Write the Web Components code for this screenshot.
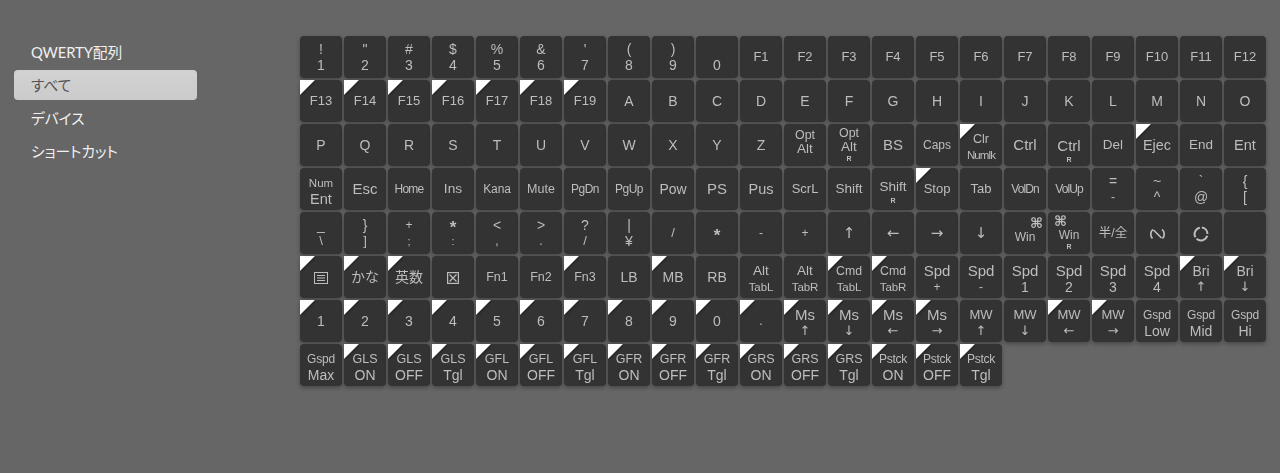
<!DOCTYPE html>
<html lang="ja"><head><meta charset="utf-8"><title>Keymap</title>
<style>
html,body{margin:0;height:473px;overflow:hidden;background:#666}
body{font-family:"Liberation Sans","Noto Sans CJK JP",sans-serif}
</style></head><body>
<app-shell>
  <side-nav slot="nav">
    <nav-item>QWERTY配列</nav-item>
    <nav-item selected>すべて</nav-item>
    <nav-item>デバイス</nav-item>
    <nav-item>ショートカット</nav-item>
  </side-nav>
  <key-board slot="main"></key-board>
</app-shell>
<script>
const def=(name,css,html,extra)=>{
  class C extends HTMLElement{
    constructor(){super();this.attachShadow({mode:'open'}).innerHTML=`<style>${css}</style>${html}`;}
    connectedCallback(){extra&&extra(this);}
  }
  customElements.define(name,C);
};
def('app-shell',`:host{display:flex;align-items:flex-start;height:473px;box-sizing:border-box;padding:36px 0 0 14px}
  .n{flex:0 0 183px;margin-top:1px}.m{margin-left:103px}`,
  `<div class="n"><slot name="nav"></slot></div><div class="m"><slot name="main"></slot></div>`);
def('side-nav',`:host{display:flex;flex-direction:column;gap:3px}`,`<slot></slot>`);
def('nav-item',`:host{display:flex;align-items:center;box-sizing:border-box;height:30px;padding:0 0 2px 17px;border-radius:4px;
  font:14.8px Lato,"Noto Sans CJK JP",sans-serif;font-feature-settings:"palt";color:#f0f0f0;letter-spacing:-.1px}
  :host([selected]){background:linear-gradient(#d2d2d2,#cbcbcb);color:#555}`,`<slot></slot>`);
def('key-line',`:host{display:block;text-align:center;white-space:nowrap}`,`<slot></slot>`);
def('key-cap',`:host{position:relative;display:flex;flex-direction:column;justify-content:center;
  box-sizing:border-box;width:42px;height:42px;border-radius:4px;background:#333;color:#bdbdbd;
  box-shadow:0 2px 4px rgba(0,0,0,.3)}
  .c{filter:blur(.45px);display:flex;flex-direction:column;justify-content:center;height:100%;width:100%}
  .f{display:none;position:absolute;left:0;top:0;width:15px;height:15px;background:linear-gradient(135deg,#fff 48%,#888 50%,rgba(0,0,0,.25) 53%,transparent 64%)}
  :host([flag]) .f{display:block}`,
  `<div class="c"><slot></slot></div><div class="f"></div>`);
const icons={
 menu:'<svg width="14" height="12" viewBox="0 0 14 12" fill="none" stroke="#bdbdbd"><rect x=".5" y=".5" width="13" height="11"/><path d="M3 3.500h8M3 6h8M3 8.500h8"/></svg>',
 cross:'<svg width="12" height="12" viewBox="0 0 12 12" fill="none" stroke="#bdbdbd" stroke-width="1.2"><rect x=".6" y=".6" width="10.800" height="10.800"/><path d="M2.500 2.500l7 7M9.500 2.500l-7 7"/></svg>',
 wave:'<svg width="17" height="12" viewBox="0 0 17 12" fill="none" stroke="#bdbdbd" stroke-width="1.7"><path d="M4 1.500C1.500 3 .8 8 3.500 10.500M4.500 2l8 8M13 1.500c2.500 1.500 3.200 6.500 .5 9"/></svg>',
 ring:'<svg width="16" height="16" viewBox="0 0 16 16" fill="none" stroke="#bdbdbd" stroke-width="2"><path d="M8.800 1.600A6.500 6.500 0 0 1 14.500 8M14.200 9.800A6.500 6.500 0 0 1 3.600 12.800M2.400 11.200A6.500 6.500 0 0 1 6.800 1.700"/></svg>'
};
const S={F13:13,F14:13,F15:13,F16:13,F17:13,F18:13,F19:13,F1:13,F2:13,F3:13,F4:13,F5:13,F6:13,F7:13,F8:13,F9:13,F10:13,F11:13,F12:13,
Opt:12.400,Clr:12.500,Numlk:11.500,Caps:12,Ctrl:15,BS:15,Del:13.500,Ejec:14.400,End:13.500,Ent:14.500,Num:11.500,Esc:15,Home:12,Ins:13.700,Kana:12,Mute:12.500,PgDn:12,PgUp:12,Pow:14,PS:15,Pus:14.500,ScrL:13,Shift:13.500,Stop:13,Tab:13,VolDn:12,VolUp:12,
Win:12,'半/全':12.500,Fn1:12.500,Fn2:12.500,Fn3:12.500,Alt:13.500,TabL:11.500,TabR:11.500,Cmd:12.300,Spd:15,Ms:15,MW:13,Gspd:12,Pstck:12,GLS:12.500,GFL:12.500,GFR:12.500,GRS:12.500,Bri:14,Max:14,ON:14,OFF:14,Tgl:14,Low:14,Mid:14,Hi:14,
':':11,';':11,'\\':13,']':13,',':12,'.':12,'-':12,'+':12,'/':13};
const L={Home:-.8,VolDn:-.9,VolUp:-.9,PgDn:-.5,PgUp:-.5,Numlk:-.9,Pstck:-.3,Gspd:-.2,Kana:-.1,TabL:-.1,TabR:-.1};
const rows=[
['!\n1','"\n2','#\n3','$\n4','%\n5','&\n6',"'\n7",'(\n8',')\n9','\n0','F1','F2','F3','F4','F5','F6','F7','F8','F9','F10','F11','F12'],
['*F13','*F14','*F15','*F16','*F17','*F18','*F19',...'ABCDEFGHIJKLMNO'],
[...'PQRSTUVWXYZ','Opt\nAlt','Opt\nAlt\nR','BS','Caps','*Clr\nNumlk','Ctrl','Ctrl\nR','Del','*Ejec','End','Ent'],
['Num\nEnt','Esc','Home','Ins','Kana','Mute','PgDn','PgUp','Pow','PS','Pus','ScrL','Shift','Shift\nR','*Stop','Tab','VolDn','VolUp','=\n-','~\n^','`\n@','{\n['],
['_\n\\','}\n]','+\n;','~*\n:','<\n,','>\n.','?\n/','|\n¥','/','~*','-','+','↑','←','→','↓','⌘\nWin','⌘\nWin\nR','半/全','#wave','#ring',''],
['*#menu','*かな','*英数','#cross','Fn1','Fn2','*Fn3','LB','*MB','RB','Alt\nTabL','Alt\nTabR','*Cmd\nTabL','*Cmd\nTabR','Spd\n+','Spd\n-','Spd\n1','Spd\n2','Spd\n3','Spd\n4','*Bri\n↑','*Bri\n↓'],
['*1','*2','*3','*4','*5','*6','*7','*8','*9','*0','*.','*Ms\n↑','*Ms\n↓','*Ms\n←','*Ms\n→','MW\n↑','MW\n↓','*MW\n←','*MW\n→','Gspd\nLow','Gspd\nMid','Gspd\nHi'],
['Gspd\nMax','*GLS\nON','*GLS\nOFF','*GLS\nTgl','*GFL\nON','*GFL\nOFF','*GFL\nTgl','*GFR\nON','*GFR\nOFF','*GFR\nTgl','*GRS\nON','*GRS\nOFF','*GRS\nTgl','*Pstck\nON','*Pstck\nOFF','*Pstck\nTgl']
];
def('key-board',`:host{display:grid;grid-template-columns:repeat(22,42px);grid-auto-rows:42px;gap:2px}`,`<slot></slot>`,el=>{
  if(el.childElementCount)return;
  rows.forEach((r,ri)=>r.forEach(raw=>{
    const cap=document.createElement('key-cap');
    let t=raw;
    if(t[0]==='*'&&t.length>1){cap.setAttribute('flag','');t=t.slice(1);}
    const parts=t.split('\n');
    const three=parts.length===3, two=parts.length===2;
    const tight=two&&(parts[0]==='Opt'||parts[0]==='⌘');
    const rKey=two&&parts[1]==='R';
    const wide=two&&(ri>=5||parts[0]==='Clr'||parts[0]==='Num');
    parts.forEach((p,i)=>{
      const ln=document.createElement('key-line');
      ln.style.lineHeight=three?(i===2?'10px':'14px'):(tight||rKey)?'14px':'16px';
      if(p[0]==='#'&&icons[p.slice(1)]){ln.innerHTML=icons[p.slice(1)];ln.style.height='16px';ln.firstChild.style.verticalAlign='middle';}
      else if(p==='~*'){ln.textContent='*';ln.style.cssText+=';font-size:17px;font-weight:bold;transform:translateY(3px)';}
      else{
        ln.textContent=p;ln.style.fontSize=(S[p]||14)+'px';
        if(L[p])ln.style.letterSpacing=L[p]+'px';
      }
      if(!p)ln.style.height='16px';
      if(i===0&&wide)ln.style.paddingTop='4px';
      if(i===1&&tight)ln.style.paddingBottom='6px';
      if(i===0&&rKey)ln.style.paddingTop=parts[0]==='Ctrl'?'16px':'10px';
      if(p==='R'&&parts.length>1){ln.style.fontSize='7px';ln.style.fontWeight='bold';}
      if('↑↓←→'.includes(p)&&p){ln.style.fontFamily='"DejaVu Sans",sans-serif';ln.style.fontSize=parts.length>1?'13px':'15px';}
      if(p==='⌘'){ln.style.fontFamily='"DejaVu Sans",sans-serif';ln.style.fontWeight='bold';ln.style.fontSize='14px';ln.style.textAlign=three?'left':'right';ln.style.padding=three?'0 0 0 6px':'0 3px 0 0';}
      cap.append(ln);
    });
    el.append(cap);
  }));
});
</script>
</body></html>
